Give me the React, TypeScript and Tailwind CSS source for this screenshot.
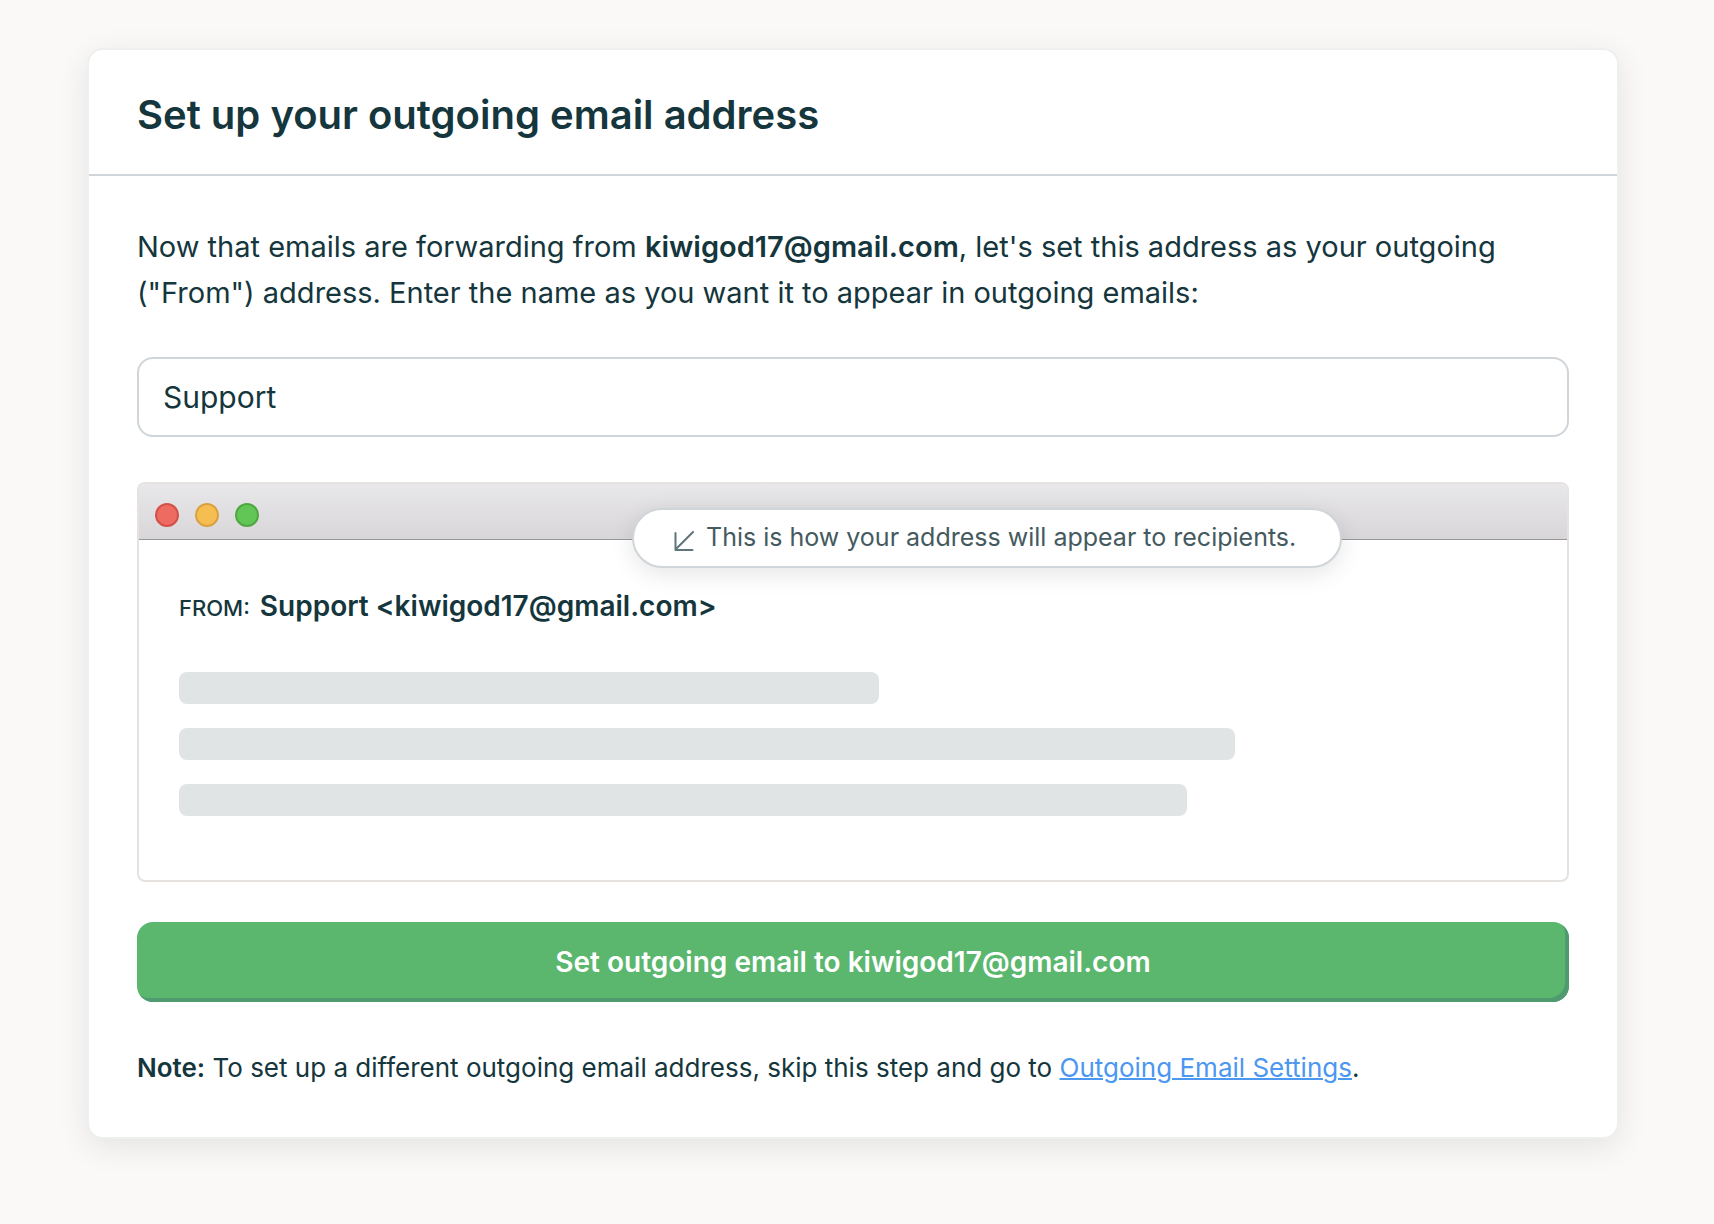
import { useState } from 'react';

const EMAIL = 'kiwigod17@gmail.com';

function ArrowDownLeft() {
  return (
    <svg
      viewBox="0 0 20 20"
      className="mt-2 size-5 shrink-0"
      fill="none"
      stroke="#60757a"
      strokeWidth="2"
      aria-hidden="true"
    >
      <path d="M19 1 2 18M1.5 2v17H18.500" strokeLinecap="round" strokeLinejoin="round" />
    </svg>
  );
}

function MailPreview({ name }: { name: string }) {
  return (
    <section
      aria-label="Email preview"
      className="relative rounded-lg border-2 border-[#e6e2df] bg-white"
    >
      <div className="flex h-14 items-center gap-4 rounded-t-md border-b border-[#98989b] bg-linear-to-b from-[#e8e7ea] to-[#d8d6d9] px-4 pt-1.5">
        <span className="size-6 rounded-full border-2 border-[#d35048] bg-[#ed6b60]" />
        <span className="size-6 rounded-full border-2 border-[#d9a13f] bg-[#f6be50]" />
        <span className="size-6 rounded-full border-2 border-[#4fa73f] bg-[#62c656]" />
      </div>

      <div className="absolute top-6 left-[493px] flex h-15 items-center gap-3 rounded-full border-2 border-[#cfd5d8] bg-white pr-11 pb-0.5 pl-10 text-[25px] leading-8 whitespace-nowrap text-[#445a60] shadow-[0_6px_24px_rgba(0,0,0,0.1)]">
        <ArrowDownLeft />
        <span>This is how your address will appear to recipients.</span>
      </div>

      <div className="px-10 pt-12 pb-16">
        <p className="flex items-baseline gap-2.5 leading-9">
          <span className="text-[22px] font-medium">FROM:</span>
          <span className="text-[28px] font-semibold">
            {name} &lt;{EMAIL}&gt;
          </span>
        </p>
        <div className="mt-[46px] flex flex-col gap-6">
          <div className="h-8 w-[700px] max-w-full rounded-lg bg-[#e0e4e4]" />
          <div className="h-8 w-[1056px] max-w-full rounded-lg bg-[#e0e4e4]" />
          <div className="h-8 w-[1008px] max-w-full rounded-lg bg-[#e0e4e4]" />
        </div>
      </div>
    </section>
  );
}

export default function App() {
  const [name, setName] = useState('Support');

  return (
    <div className="min-h-screen bg-[#faf9f7] pt-12 pr-[95px] pb-20 pl-[87px] font-['Inter',sans-serif] text-[#14363c]">
      <main className="rounded-2xl border-2 border-[#eef0ef] bg-white shadow-[0_8px_32px_rgba(0,0,0,0.09)]">
        <header className="border-b-2 border-[#cfd5d8] px-12 pt-[41px] pb-[35px]">
          <h1 className="text-[40px] leading-12 font-semibold">Set up your outgoing email address</h1>
        </header>

        <form className="px-12 pt-12 pb-[49px]" onSubmit={(e) => e.preventDefault()}>
          <label htmlFor="sender-name" className="block text-[29px] leading-[46px]">
            Now that emails are forwarding from <strong className="font-semibold">{EMAIL}</strong>,
            let's set this address as your outgoing ("From") address. Enter the name as you want it to
            appear in outgoing emails:
          </label>
          <input
            id="sender-name"
            type="text"
            value={name}
            onChange={(e) => setName(e.target.value)}
            className="mt-[41px] mb-[45px] block h-20 w-full rounded-2xl border-2 border-[#cfd5d8] bg-white px-6 text-[30px] outline-none"
          />

          <MailPreview name={name} />

          <button
            type="submit"
            className="mt-10 block h-20 w-full rounded-2xl bg-[#5bb66e] text-[28px] font-semibold text-white shadow-[inset_-4px_-4px_0_#509a70]"
          >
            Set outgoing email to {EMAIL}
          </button>

          <p className="mt-[46px] text-[26px] leading-10">
            <strong className="font-semibold">Note:</strong> To set up a different outgoing email
            address, skip this step and go to{' '}
            <a href="#outgoing-email-settings" className="text-[#4c97f0] underline decoration-2">
              Outgoing Email Settings
            </a>
            .
          </p>
        </form>
      </main>
    </div>
  );
}
